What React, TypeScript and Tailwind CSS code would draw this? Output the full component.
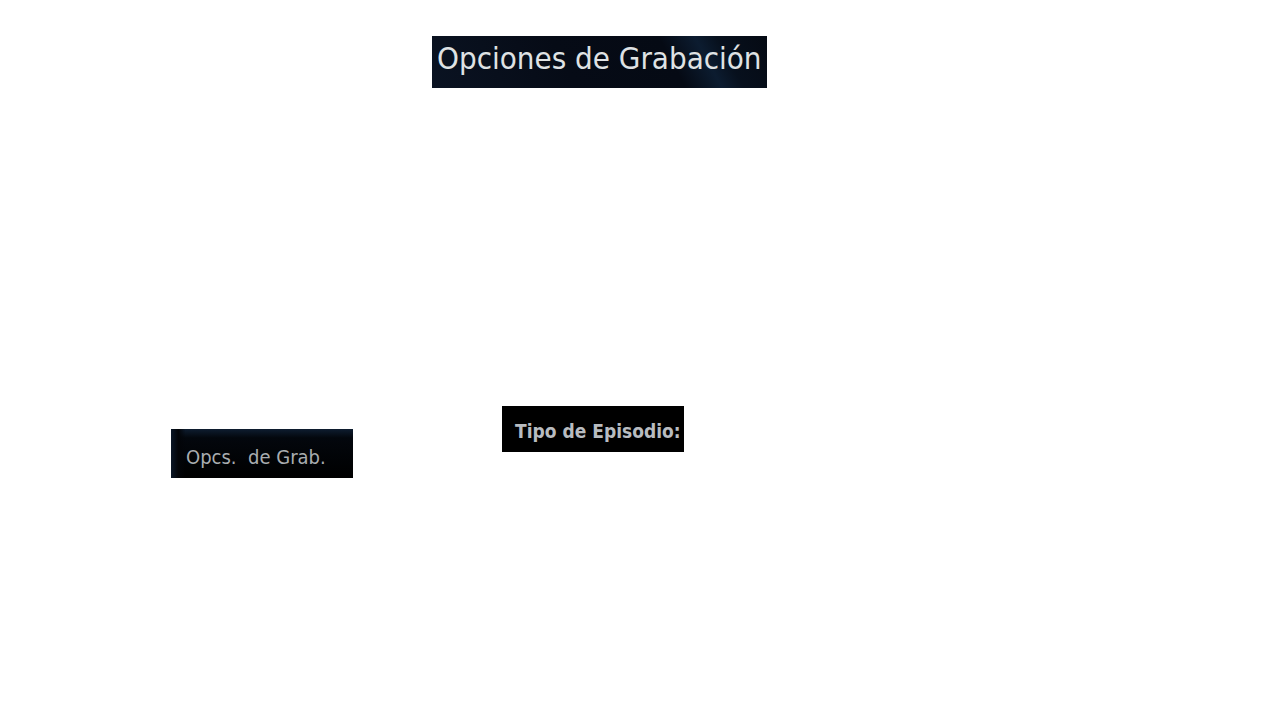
export default function App() {
  return (
    // free canvas: three cut-out labels placed on a blank white page
    <div className="relative h-[720px] w-[1280px] bg-white" style={{ fontFamily: '"DejaVu Sans Condensed", "DejaVu Sans", sans-serif' }}>
      {/* Title banner */}
      <div className="absolute left-[432px] top-[36px] flex h-[52px] w-[335px] items-start overflow-hidden bg-[linear-gradient(62deg,#0a1322_0%,#060b16_40%,#050a14_70%,#0c1c30_80%,#07101d_86%,#050a13_100%)] pl-[5px] pt-[7px]">
        <span className="whitespace-nowrap text-[31px] leading-none text-[#dfe2e4]">Opciones de Grabación</span>
      </div>

      {/* Short label */}
      <div className="absolute left-[171px] top-[429px] flex h-[49px] w-[182px] items-end overflow-hidden bg-[linear-gradient(90deg,#0a1626_0%,#020408_4%,transparent_8%),linear-gradient(180deg,#0e1d30_0%,#03070d_18%,#000000_100%)] pb-[11px] pl-[15px]">
        <span className="whitespace-nowrap text-[20px] leading-none text-[#a9adb0]">Opcs.&nbsp; de Grab.</span>
      </div>

      {/* Field label */}
      <div className="absolute left-[502px] top-[406px] flex h-[46px] w-[182px] items-center overflow-hidden bg-black pl-[13px] pt-[4px]">
        <span className="whitespace-nowrap text-[19px] font-bold leading-none text-[#b8bcc0]">Tipo de Episodio:</span>
      </div>
    </div>
  )
}
